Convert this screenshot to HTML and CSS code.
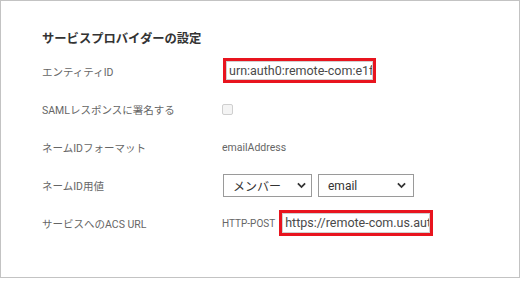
FILE: index.html
```html
<!DOCTYPE html>
<html lang="ja">
<head>
<meta charset="utf-8">
<link rel="stylesheet" href="styles.css">
</head>
<body>
<div class="card">
  <h2 class="title">サービスプロバイダーの設定</h2>
  <div class="row">
    <div class="label">エンティティID</div>
    <div class="value">
      <div class="mark mark-entity"><div class="input">urn:auth0:remote-com:e1f3</div></div>
    </div>
  </div>
  <div class="row">
    <div class="label">SAMLレスポンスに署名する</div>
    <div class="value"><span class="checkbox"></span></div>
  </div>
  <div class="row">
    <div class="label">ネームIDフォーマット</div>
    <div class="value text">emailAddress</div>
  </div>
  <div class="row">
    <div class="label">ネームID用値</div>
    <div class="value">
      <div class="select select-a"><span>メンバー</span><svg class="chev" viewBox="0 0 10 7" width="9" height="7"><path d="M1 1.2 L5 5.2 L9 1.2" fill="none" stroke="#333" stroke-width="2"/></svg></div>
      <div class="select select-b"><span>email</span><svg class="chev" viewBox="0 0 10 7" width="9" height="7"><path d="M1 1.2 L5 5.2 L9 1.2" fill="none" stroke="#333" stroke-width="2"/></svg></div>
    </div>
  </div>
  <div class="row">
    <div class="label">サービスへのACS URL</div>
    <div class="value">
      <span class="text method">HTTP-POST</span>
      <div class="mark mark-acs"><div class="input">https://remote-com.us.auth</div></div>
    </div>
  </div>
</div>
</body>
</html>
```

FILE: styles.css
```css
html, body {
  margin: 0;
  padding: 0;
  background: #fff;
}
body {
  font-family: Roboto, "Noto Sans CJK JP", sans-serif;
  color: #666;
}
.card {
  box-sizing: border-box;
  width: 520px;
  height: 278px;
  border: 1px solid #c3c3c3;
  padding: 29px 0 0 41px;
}
.title {
  margin: 0 0 4px 0;
  height: 18px;
  line-height: 18px;
  font-size: 12.3px;
  font-weight: bold;
  color: #333;
}
.row {
  display: flex;
  align-items: center;
  height: 38px;
}
.label {
  width: 180px;
  font-size: 10.5px;
  color: #666;
  flex-shrink: 0;
}
.value {
  display: flex;
  align-items: center;
}
.text {
  font-size: 10.5px;
  color: #666;
}
.mark {
  border: 3px solid #e8141e;
  box-sizing: border-box;
  display: flex;
}
.mark-entity {
  width: 153px;
  height: 25px;
  margin-left: 1px;
  margin-top: -2px;
}
.mark-acs {
  width: 154px;
  height: 26px;
  margin-left: 4px;
  margin-top: -1px;
}
.input {
  flex: 1;
  box-sizing: border-box;
  border: 1px solid #d0d0d0;
  padding: 0 0 0 2px;
  font-size: 12.5px;
  line-height: 17px;
  color: #4a4a4a;
  white-space: nowrap;
  overflow: hidden;
}
.checkbox {
  display: block;
  width: 9px;
  height: 9px;
  border: 1px solid #cfcfcf;
  border-radius: 2px;
  background: #f4f4f4;
  margin-top: 1px;
}
.select {
  box-sizing: border-box;
  height: 23px;
  border: 1px solid #9a9a9a;
  display: flex;
  align-items: center;
  justify-content: space-between;
  padding: 0 5px 0 9px;
  font-size: 12px;
  color: #333;
  margin-top: 1px;
}
.select-a {
  width: 89px;
  margin-left: 1px;
}
.select-b {
  width: 96px;
  margin-left: 6px;
  padding-right: 7px;
}
.chev {
  display: block;
}
.method {
  color: #666;
  font-size: 10px;
}
```
